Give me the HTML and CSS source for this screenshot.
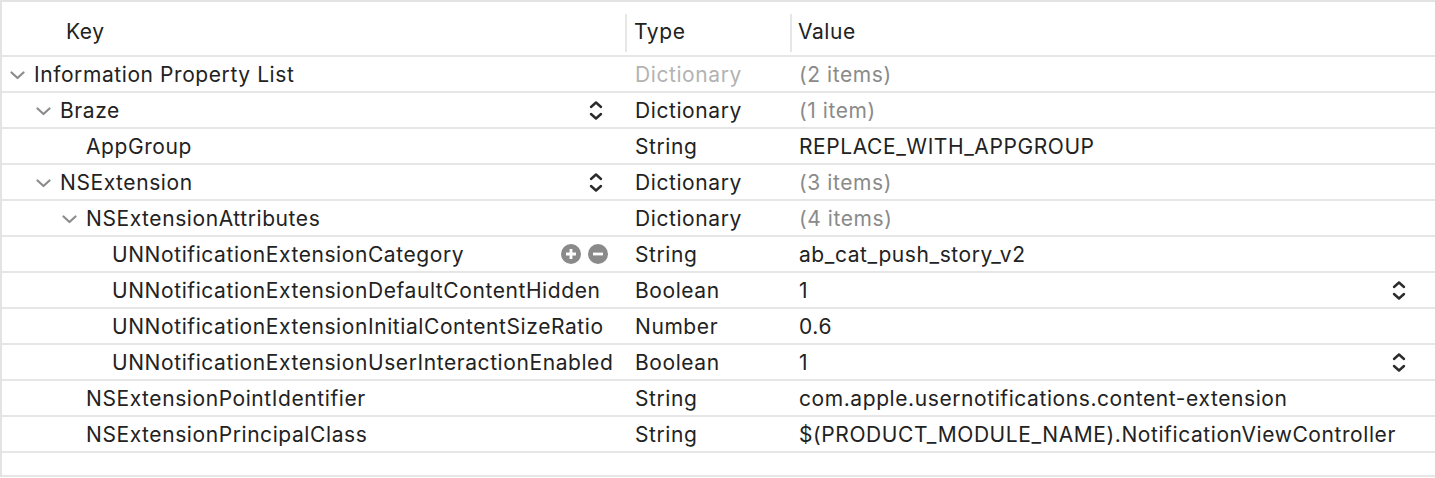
FILE: index.html
```html
<!DOCTYPE html>
<html>
<head>
<meta charset="utf-8">
<link rel="stylesheet" href="styles.css">
</head>
<body>
<svg width="0" height="0" style="position:absolute">
  <defs>
    <symbol id="disc" viewBox="0 0 15 9"><path d="M1.5 1.5 L7.5 7 L13.5 1.5" fill="none" stroke="#8c8c8c" stroke-width="2.2" stroke-linecap="round" stroke-linejoin="round"/></symbol>
    <symbol id="step" viewBox="0 0 14 21"><path d="M2 7 L7 2.5 L12 7" fill="none" stroke="#2b2b2b" stroke-width="2.4" stroke-linecap="round" stroke-linejoin="round"/><path d="M2 14 L7 18.5 L12 14" fill="none" stroke="#2b2b2b" stroke-width="2.4" stroke-linecap="round" stroke-linejoin="round"/></symbol>
  </defs>
</svg>
<div class="plist">
  <div class="row header">
    <div class="cell key"><span class="hdr-key">Key</span></div>
    <div class="cell type hdr"><span class="sep"></span>Type</div>
    <div class="cell value hdr"><span class="sep"></span>Value</div>
  </div>

  <div class="row">
    <div class="cell key lvl0"><span class="disc"><svg><use href="#disc"/></svg></span><span class="name">Information Property List</span></div>
    <div class="cell type dim">Dictionary</div>
    <div class="cell value muted">(2 items)</div>
  </div>

  <div class="row">
    <div class="cell key lvl1"><span class="disc"><svg><use href="#disc"/></svg></span><span class="name">Braze</span><span class="acc"><svg class="step"><use href="#step"/></svg></span></div>
    <div class="cell type">Dictionary</div>
    <div class="cell value muted">(1 item)</div>
  </div>

  <div class="row">
    <div class="cell key lvl2"><span class="disc"></span><span class="name">AppGroup</span></div>
    <div class="cell type">String</div>
    <div class="cell value">REPLACE_WITH_APPGROUP</div>
  </div>

  <div class="row">
    <div class="cell key lvl1"><span class="disc"><svg><use href="#disc"/></svg></span><span class="name">NSExtension</span><span class="acc"><svg class="step"><use href="#step"/></svg></span></div>
    <div class="cell type">Dictionary</div>
    <div class="cell value muted">(3 items)</div>
  </div>

  <div class="row">
    <div class="cell key lvl2"><span class="disc"><svg><use href="#disc"/></svg></span><span class="name">NSExtensionAttributes</span></div>
    <div class="cell type">Dictionary</div>
    <div class="cell value muted">(4 items)</div>
  </div>

  <div class="row">
    <div class="cell key lvl3"><span class="disc"></span><span class="name">UNNotificationExtensionCategory</span>
      <span class="acc pm">
        <svg class="circ" viewBox="0 0 20 20"><circle cx="10" cy="10" r="10" fill="#8a8a8a"/><path d="M10 5 V15 M5 10 H15" stroke="#fff" stroke-width="2.8"/></svg>
        <svg class="circ" viewBox="0 0 20 20"><circle cx="10" cy="10" r="10" fill="#8a8a8a"/><path d="M5 10 H15" stroke="#fff" stroke-width="2.8"/></svg>
      </span>
    </div>
    <div class="cell type">String</div>
    <div class="cell value">ab_cat_push_story_v2</div>
  </div>

  <div class="row">
    <div class="cell key lvl3"><span class="disc"></span><span class="name">UNNotificationExtensionDefaultContentHidden</span></div>
    <div class="cell type">Boolean</div>
    <div class="cell value"><span class="vtext">1</span><svg class="step vstep"><use href="#step"/></svg></div>
  </div>

  <div class="row">
    <div class="cell key lvl3"><span class="disc"></span><span class="name">UNNotificationExtensionInitialContentSizeRatio</span></div>
    <div class="cell type">Number</div>
    <div class="cell value">0.6</div>
  </div>

  <div class="row">
    <div class="cell key lvl3"><span class="disc"></span><span class="name">UNNotificationExtensionUserInteractionEnabled</span></div>
    <div class="cell type">Boolean</div>
    <div class="cell value"><span class="vtext">1</span><svg class="step vstep"><use href="#step"/></svg></div>
  </div>

  <div class="row">
    <div class="cell key lvl2"><span class="disc"></span><span class="name">NSExtensionPointIdentifier</span></div>
    <div class="cell type">String</div>
    <div class="cell value">com.apple.usernotifications.content-extension</div>
  </div>

  <div class="row">
    <div class="cell key lvl2"><span class="disc"></span><span class="name">NSExtensionPrincipalClass</span></div>
    <div class="cell type">String</div>
    <div class="cell value">$(PRODUCT_MODULE_NAME).NotificationViewController</div>
  </div>

  <div class="row empty"></div>
</div>
</body>
</html>
```
FILE: styles.css
```css
html, body {
  margin: 0;
  padding: 0;
  background: #ffffff;
}
body {
  font-family: "Inter", "Helvetica Neue", "Liberation Sans", sans-serif;
  font-size: 21px;
  letter-spacing: 0.58px;
  color: #222222;
  overflow: hidden;
}
.plist {
  border-top: 2px solid #e3e3e3;
  border-left: 2px solid #e3e3e3;
  width: 1435px;
  box-sizing: border-box;
}
.row {
  display: grid;
  grid-template-columns: 623px 165px 1fr;
  height: 34px;
  border-bottom: 2px solid #e6e6e6;
}
.row.header {
  padding-top: 6px;
  box-sizing: border-box;
  height: 55px;
}
.row.empty {
  height: 22px;
}
.cell {
  display: flex;
  align-items: center;
  white-space: nowrap;
  min-width: 0;
}
.hdr-key {
  padding-left: 64px;
}
.hdr {
  position: relative;
}
.sep {
  position: absolute;
  left: 0;
  top: 6px;
  bottom: 3px;
  width: 2px;
  background: #e6e6e6;
}
.type {
  padding-left: 10px;
}
.value {
  padding-left: 9px;
  padding-right: 29px;
}
.type.hdr { padding-left: 9px; }
.value.hdr { padding-left: 8px; }
.lvl0 { padding-left: 6px; }
.lvl1 { padding-left: 32px; }
.lvl2 { padding-left: 58px; }
.lvl3 { padding-left: 84px; }
.disc {
  width: 26px;
  flex: none;
  display: flex;
  align-items: center;
}
.disc svg {
  width: 15px;
  height: 9px;
  margin-left: 2px;
  margin-top: 2px;
}
.acc {
  margin-left: auto;
  margin-right: 22px;
  display: flex;
  align-items: center;
  gap: 7px;
}
.step {
  width: 14px;
  height: 21px;
  display: block;
}
.pm {
  margin-right: 17px;
}
.circ {
  width: 20px;
  height: 20px;
  display: block;
}
.vtext {
  flex: 1;
}
.vstep {
  flex: none;
}
.dim {
  color: #b3b3b3;
}
.muted {
  color: #8a8a8a;
}
```
